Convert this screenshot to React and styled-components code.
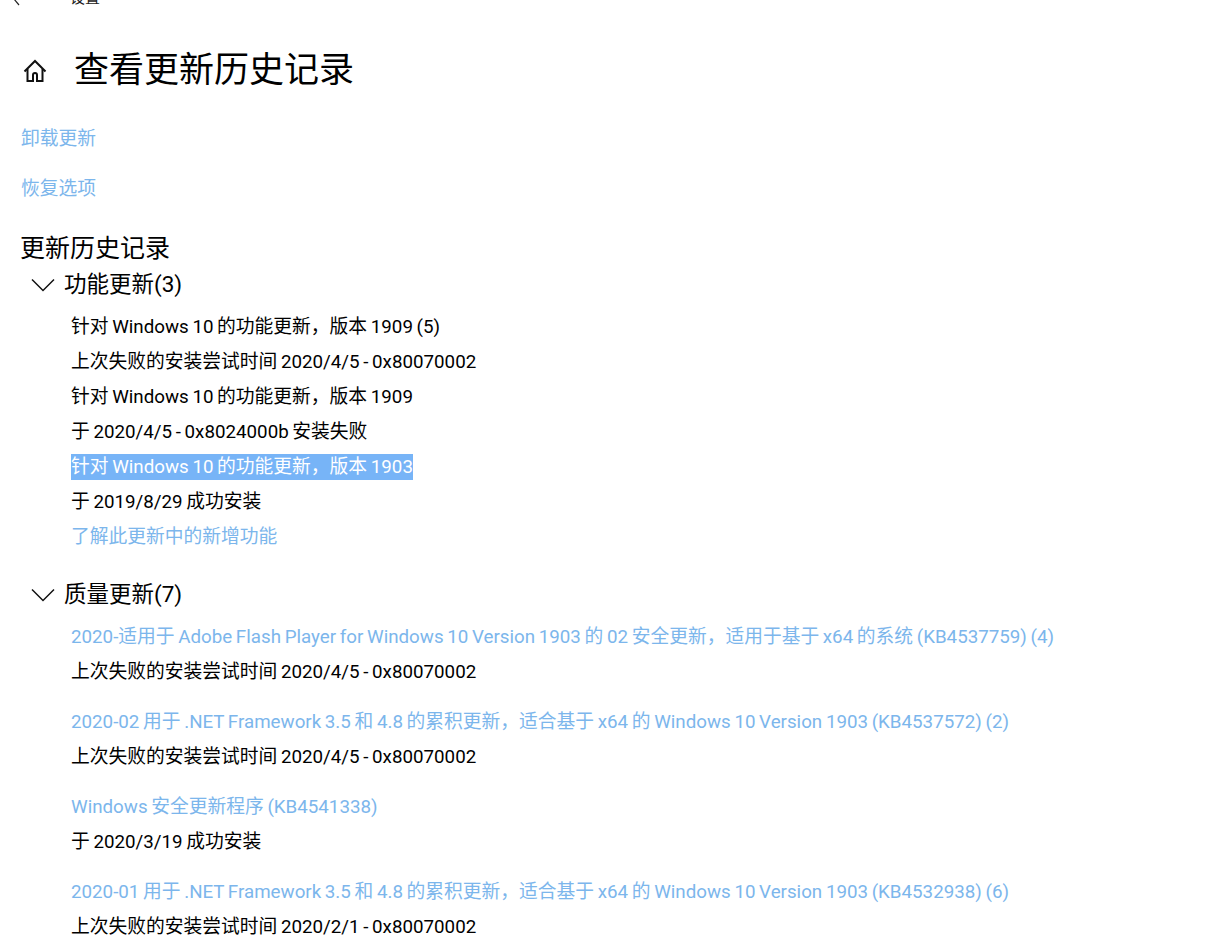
import React from "react";
import styled, { createGlobalStyle } from "styled-components";

const GlobalStyle = createGlobalStyle`
  html, body {
    margin: 0;
    padding: 0;
    height: 100%;
    overflow: hidden;
    background: #fff;
  }
`;

const Page = styled.div`
  width: 1207px;
  height: 944px;
  overflow: hidden;
  background: #fff;
  color: #000;
  font-family: Roboto, "Noto Sans CJK SC", sans-serif;
  font-size: 18.75px;
`;

const TopBar = styled.div`
  display: flex;
  align-items: flex-end;
  box-sizing: border-box;
  height: 8px;
  overflow: hidden;
  padding: 0 0 2px 12px;
  color: #222;
`;

const BackIcon = styled.svg`
  width: 9px;
  height: 9px;
  margin-right: 49px;
  flex: none;
`;

const TopLabel = styled.span`
  font-size: 15px;
  line-height: 15px;
`;

const TitleRow = styled.div`
  display: flex;
  align-items: center;
  height: 62px;
  margin-top: 32px;
  padding-left: 22px;
`;

const HomeIcon = styled.svg`
  width: 26px;
  height: 26px;
  margin-right: 26px;
  flex: none;
`;

const Title = styled.h1`
  margin: 0;
  font-size: 35px;
  font-weight: 400;
  line-height: 62px;
`;

const Links = styled.div`
  padding-top: 12px;
`;

const TopLink = styled.div`
  height: 50px;
  padding-left: 21px;
  color: #7cb6ec;
  line-height: 50px;
`;

const Section = styled.h2`
  margin: 20px 0 0;
  padding-left: 20px;
  font-size: 25px;
  font-weight: 400;
  line-height: 30px;
`;

const GroupHeader = styled.div`
  display: flex;
  align-items: center;
  height: 36px;
  padding-left: 31px;
  margin-top: ${({ $gap }) => $gap || 0}px;
  font-size: 22.5px;
`;

const Chevron = styled.svg`
  width: 24px;
  height: 14px;
  margin: 5px 9px 0 0;
  flex: none;
`;

const List = styled.div`
  padding: 10px 0 0 71px;
  word-spacing: -1px;
`;

const Line = styled.div`
  height: 35px;
  line-height: 35px;
  white-space: nowrap;
  color: ${({ $link }) => ($link ? "#7cb6ec" : "#000")};
  margin-top: ${({ $spaced }) => ($spaced ? 15 : 0)}px;
`;

const Selected = styled.span`
  display: inline-block;
  height: 26px;
  line-height: 26px;
  background: #77b4f7;
  color: #fff;
`;

const Home = () => (
  <HomeIcon viewBox="0 0 26 26" fill="none" stroke="#111" strokeWidth="2">
    <path d="M2.500 13.500 13 3l10.500 10.500" />
    <path d="M5.500 11v12h5.500v-6a2 2 0 0 1 4 0v6h5.500V11" />
  </HomeIcon>
);

const Down = () => (
  <Chevron viewBox="0 0 24 14" fill="none" stroke="#111" strokeWidth="1.500">
    <path d="M1 1.500 12 12.500 23 1.500" />
  </Chevron>
);

const quality = [
  ["2020-适用于 Adobe Flash Player for Windows 10 Version 1903 的 02 安全更新，适用于基于 x64 的系统 (KB4537759) (4)", "上次失败的安装尝试时间 2020/4/5 - 0x80070002"],
  ["2020-02 用于 .NET Framework 3.5 和 4.8 的累积更新，适合基于 x64 的 Windows 10 Version 1903 (KB4537572) (2)", "上次失败的安装尝试时间 2020/4/5 - 0x80070002"],
  ["Windows 安全更新程序 (KB4541338)", "于 2020/3/19 成功安装"],
  ["2020-01 用于 .NET Framework 3.5 和 4.8 的累积更新，适合基于 x64 的 Windows 10 Version 1903 (KB4532938) (6)", "上次失败的安装尝试时间 2020/2/1 - 0x80070002"],
];

export default function App() {
  return (
    <Page>
      <GlobalStyle />
      <TopBar>
        <BackIcon viewBox="0 0 9 9" fill="none" stroke="#222" strokeWidth="1.200">
          <path d="M2 2 7 8" />
        </BackIcon>
        <TopLabel>设置</TopLabel>
      </TopBar>
      <TitleRow>
        <Home />
        <Title>查看更新历史记录</Title>
      </TitleRow>
      <Links>
        <TopLink>卸载更新</TopLink>
        <TopLink>恢复选项</TopLink>
      </Links>
      <Section>更新历史记录</Section>
      <GroupHeader>
        <Down />
        功能更新(3)
      </GroupHeader>
      <List>
        <Line>针对 Windows 10 的功能更新，版本 1909 (5)</Line>
        <Line>上次失败的安装尝试时间 2020/4/5 - 0x80070002</Line>
        <Line>针对 Windows 10 的功能更新，版本 1909</Line>
        <Line>于 2020/4/5 - 0x8024000b 安装失败</Line>
        <Line>
          <Selected>针对 Windows 10 的功能更新，版本 1903</Selected>
        </Line>
        <Line>于 2019/8/29 成功安装</Line>
        <Line $link>了解此更新中的新增功能</Line>
      </List>
      <GroupHeader $gap={19}>
        <Down />
        质量更新(7)
      </GroupHeader>
      <List>
        {quality.map(([link, status], i) => (
          <React.Fragment key={link}>
            <Line $link $spaced={i > 0}>{link}</Line>
            <Line>{status}</Line>
          </React.Fragment>
        ))}
      </List>
    </Page>
  );
}
